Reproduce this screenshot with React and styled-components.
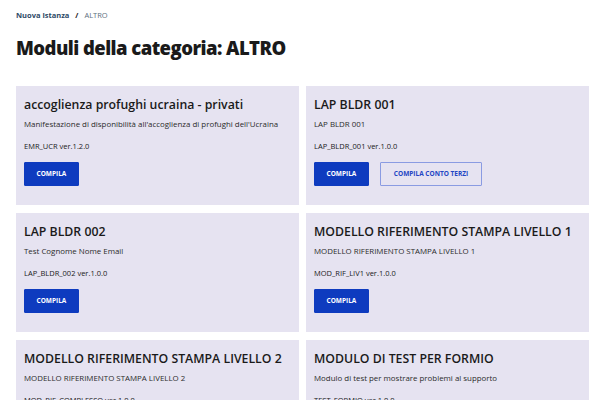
import styled, { createGlobalStyle } from 'styled-components';

const GlobalStyle = createGlobalStyle`
    body {
        margin: 0;
        background: #ffffff;
        font-family: 'Open Sans', 'Noto Sans', sans-serif;
        color: #1a1a1a;
    }
`

const Page = styled.div`
    padding: 9px 11px 0 16px;
`
const Breadcrumb = styled.nav`
    display: flex;
    align-items: center;
    gap: 6px;
    font-size: 7.5px;
    line-height: 12px;
    .link{
        color: #2e4a66;
        font-weight: 700;
    }
    .sep{
        color: #1a1a1a;
        font-weight: 700;
    }
    .current{
        color: #5d6f80;
    }
`
const Head = styled.h1`
    margin: 13.7px 0 0 0;
    font-size: 18.5px;
    line-height: 26px;
    font-weight: 800;
    letter-spacing: -0.55px;
    color: #1a1a1a;
`
const Grid = styled.div`
    display: grid;
    grid-template-columns: 283px 283px;
    column-gap: 7px;
    row-gap: 8px;
    margin-top: 25.3px;
`
const Card = styled.div`
    background: #e6e3f1;
    padding: 10.6px 8px 19px 8px;
    display: flex;
    flex-direction: column;
`
const Title = styled.h3`
    margin: 0;
    font-size: 12.3px;
    line-height: 16px;
    font-weight: 600;
    color: #1a1a1a;
    white-space: nowrap;
`
const Desc = styled.p`
    margin: 5.6px 0 0 0;
    font-size: 7.9px;
    line-height: 12px;
    color: #2b2b2b;
    white-space: nowrap;
`
const Code = styled.p`
    margin: 11.3px 0 0 0;
    font-size: 7.5px;
    line-height: 10px;
    color: #1a1a1a;
`
const Actions = styled.div`
    display: flex;
    gap: 11px;
    margin-top: 10.5px;
`
const Button = styled.button`
    height: 24px;
    padding: 0 ${p => p.$outline ? '13px' : '11.5px'};
    border: 1px solid ${p => p.$outline ? '#8a9be2' : '#0e3bbf'};
    background: ${p => p.$outline ? 'transparent' : '#0e3bbf'};
    color: ${p => p.$outline ? '#2345c4' : '#ffffff'};
    font-family: 'Open Sans', 'Noto Sans', sans-serif;
    font-size: 6.5px;
    font-weight: 700;
    border-radius: 1px;
    cursor: pointer;
`

const modules = [
    { title: 'accoglienza profughi ucraina - privati', desc: "Manifestazione di disponibilità all'accoglienza di profughi dell'Ucraina", code: 'EMR_UCR ver.1.2.0' },
    { title: 'LAP BLDR 001', desc: 'LAP BLDR 001', code: 'LAP_BLDR_001 ver.1.0.0', terzi: true },
    { title: 'LAP BLDR 002', desc: 'Test Cognome Nome Email', code: 'LAP_BLDR_002 ver.1.0.0' },
    { title: 'MODELLO RIFERIMENTO STAMPA LIVELLO 1', desc: 'MODELLO RIFERIMENTO STAMPA LIVELLO 1', code: 'MOD_RIF_LIV1 ver.1.0.0' },
    { title: 'MODELLO RIFERIMENTO STAMPA LIVELLO 2', desc: 'MODELLO RIFERIMENTO STAMPA LIVELLO 2', code: 'MOD_RIF_COMPLESSO ver.1.0.0' },
    { title: 'MODULO DI TEST PER FORMIO', desc: 'Modulo di test per mostrare problemi al supporto', code: 'TEST_FORMIO ver.1.0.0' },
]

const App = () => {
    return (
        <>
        <GlobalStyle />
        <Page>
            <Breadcrumb>
                <span className='link'>Nuova istanza</span>
                <span className='sep'>/</span>
                <span className='current'>ALTRO</span>
            </Breadcrumb>
            <Head>Moduli della categoria: ALTRO</Head>
            <Grid>
                {modules.map(m => (
                    <Card key={m.code}>
                        <Title>{m.title}</Title>
                        <Desc>{m.desc}</Desc>
                        <Code>{m.code}</Code>
                        <Actions>
                            <Button>COMPILA</Button>
                            {m.terzi && <Button $outline>COMPILA CONTO TERZI</Button>}
                        </Actions>
                    </Card>
                ))}
            </Grid>
        </Page>
        </>
    );
}

export default App;
